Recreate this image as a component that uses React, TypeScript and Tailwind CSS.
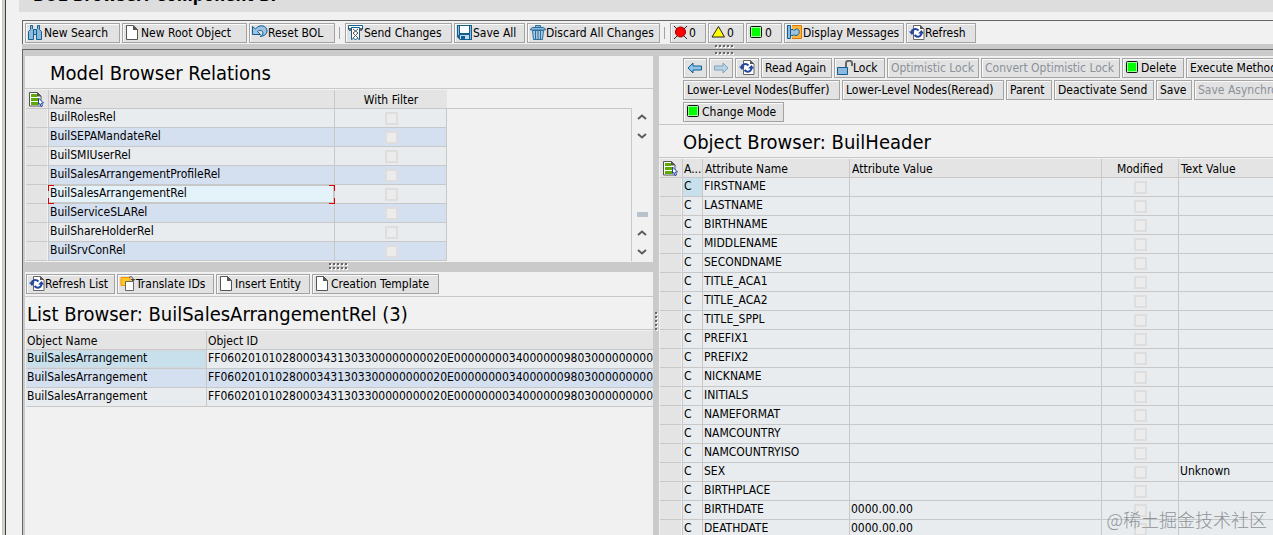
import React from 'react'
import clsx from 'clsx'

type IconName =
  | 'binoculars'
  | 'page'
  | 'undo'
  | 'send'
  | 'save'
  | 'trash'
  | 'red'
  | 'yellow'
  | 'green'
  | 'messages'
  | 'refresh'
  | 'back'
  | 'forward'
  | 'lock'
  | 'translate'
  | 'rows'

const ICONS: Record<IconName, React.ReactNode> = {
  binoculars: (
    <g fill="#8fb9dc" stroke="#0f5f93">
      <path d="M2.5 0.5h2v3l1 1v10h-5v-8l2-2z" />
      <path d="M9.5 0.5h2v4l2 2v8h-5v-10l1-1z" />
      <path d="M5.5 4.5h3v5h-3z" />
    </g>
  ),
  page: (
    <g>
      <path d="M1.5 0.5h7l4 4v10h-11z" fill="#fff" stroke="#555" />
      <path d="M8 0l5 5h-5z" fill="#555" />
    </g>
  ),
  undo: (
    <path
      d="M0.5 1.5v8h8l-3-3c2-2 5.5-1 5.5 1.5 0 1.5-1 2.5-3 3.5 4.5-.5 7-2.5 7-5.5 0-5.5-7.5-7.5-11.5-2z"
      fill="#9cc3e2"
      stroke="#0f5f93"
    />
  ),
  send: (
    <g>
      <path d="M0.5 0.5h14v4h-14z" fill="#fff" stroke="#0f5f93" />
      <path d="M1 3h13v3h-13z" fill="#666" />
      <path d="M3.5 2.5h8v12l-2-1-2 1-2-1-2 1z" fill="#fff" stroke="#0f5f93" />
      <path d="M5 4l5 4-5 5M10 4l-5 4 5 5" stroke="#555" fill="none" />
    </g>
  ),
  save: (
    <g>
      <path d="M0 0h15v15h-12l-3-3z" fill="#0f5f93" />
      <path d="M3 1h9v7h-9z" fill="#fff" />
      <path d="M1 1h1v9h-1zM13 1h1v13h-1z" fill="#8fb9dc" />
      <path d="M3 10h9v4h-9z" fill="#c4d9ea" />
      <path d="M4 11h4v3h-4z" fill="#0f5f93" />
    </g>
  ),
  trash: (
    <g>
      <path d="M5.5 2.5v-2h5v2M0.5 5v-1l2-1.5h11l2 1.5v1z" fill="#8fb9dc" stroke="#2b6f9d" />
      <path d="M2.5 5.5h11l-1 9h-9z" fill="#a9c9e3" stroke="#2b6f9d" />
      <path d="M5.5 6v8M8 6v8M10.5 6v8" stroke="#2b6f9d" />
    </g>
  ),
  red: (
    <g>
      <path d="M1 1l13 13M14 1l-13 13" stroke="#222" />
      <circle cx="7.5" cy="7" r="5" fill="#f00" stroke="#900" />
    </g>
  ),
  yellow: <path d="M7.5 1.5l6 10.5h-12.5z" fill="#ff0" stroke="#222" />,
  green: (
    <g>
      <rect x="1.5" y="1.5" width="11" height="11" rx="1" fill="#9f9" stroke="#111" />
      <rect x="3" y="3" width="8" height="8" fill="#0f0" />
    </g>
  ),
  messages: (
    <g>
      <path d="M5 0.5h9.5v13h-9.5" fill="#ffb43c" stroke="#e07800" />
      <path d="M0.5 0.5h3v13h-3z" fill="#8fb9dc" stroke="#0f5f93" />
      <path d="M3.5 4.5h2.5c1 1.5 1.5 1 3-.5 4-1.5 4.5 6.5 0 6.5-1.5 0-2-1.5-3 0h-2.5z" fill="#9cc3e2" stroke="#0f5f93" />
    </g>
  ),
  refresh: (
    <g>
      <path d="M4.5 0.5h7l3.5 3.5v10.5h-10.5z" fill="#fff" stroke="#666" />
      <path d="M11 0l4 4h-4z" fill="#555" />
      <path d="M2.5 7c.5-3 4.5-4 7-1.5M12.5 8c-.5 4-4.5 5-7 2" stroke="#2345a0" strokeWidth="2" fill="none" />
      <path d="M0 6.5h5.5l-2.5 3.5zM9 8.5l3.5-3.5 2.5 3.5z" fill="#2345a0" />
    </g>
  ),
  back: <path d="M1 8l5-5v3h8.5v4h-8.5v3z" fill="#8fc4ea" stroke="#0f5f93" />,
  forward: <path d="M15 8l-5-5v3h-8.5v4h8.5v3z" fill="#bcd3e4" stroke="#7ea3be" />,
  lock: (
    <g>
      <path d="M9 7v-4c0-3 6-3 6 0v3" fill="none" stroke="#666" strokeWidth="2" />
      <path d="M0.5 7.5h10v7h-10z" fill="#8fb9dc" stroke="#0f5f93" />
    </g>
  ),
  translate: (
    <g>
      <path d="M1 1.5h9v8h-9z" fill="#ffc81e" stroke="#ff9000" />
      <path d="M5.5 5.5h8v9h-8z" fill="#fff" stroke="#666" />
      <path d="M9 1.5c2-1.5 4-.5 4 2" fill="none" stroke="#444" />
      <path d="M10.5 3h5l-2.5 2.5z" fill="#444" />
    </g>
  ),
  rows: (
    <g>
      <path d="M0.5 0.5h8l3.5 3.5v10h-11.5z" fill="#fff" stroke="#555" />
      <path d="M8 0l4.5 4.5h-4.5z" fill="#555" />
      <path d="M2 2h6v3h-6zM2 6h8v3h-8zM2 10h7v3h-7z" fill="#5cab00" />
      <path d="M9.5 6l5 5h-2l1 3-1.5.5-1-3-1.5 1z" fill="#fff" stroke="#2345a0" />
    </g>
  ),
}

function Icon({ name }: { name: IconName }) {
  return (
    <svg viewBox="0 0 16 16" className="size-4 shrink-0" fill="none" aria-hidden="true">
      {ICONS[name]}
    </svg>
  )
}

interface ToolButtonProps {
  icon?: IconName
  label?: string
  title?: string
  disabled?: boolean
  className?: string
}

function ToolButton({ icon, label, title, disabled, className }: ToolButtonProps) {
  return (
    <button
      type="button"
      disabled={disabled}
      aria-label={label ? undefined : title}
      className={clsx(
        'flex h-5 shrink-0 items-center whitespace-nowrap border border-[#a3a3a3] bg-[#e2e2e2] text-black shadow-[inset_1px_1px_0_#fafafa] disabled:text-[#8b9199]',
        icon && label && 'pl-0.5',
        icon && !label && 'px-[3px]',
        !icon && 'pl-[3px]',
        className,
      )}
    >
      {icon && <Icon name={icon} />}
      {label}
    </button>
  )
}

function Divider() {
  return <span className="ml-0.5 mr-[3px] h-3 w-px bg-[#a3a3a3]" />
}

function Grip({ cols, rows }: { cols: number; rows: number }) {
  const dots = []
  for (let y = 0; y < rows; y++) {
    for (let x = 0; x < cols; x++) dots.push([x * 4, y * 4])
  }
  return (
    <svg width={cols * 4} height={rows * 4} aria-hidden="true" className="shrink-0">
      {dots.map(([x, y]) => (
        <g key={`${x}-${y}`}>
          <rect x={x + 1} y={y + 1} width="2" height="2" fill="#fff" />
          <rect x={x} y={y} width="2" height="2" fill="#666" />
        </g>
      ))}
    </svg>
  )
}

function PaneTitle({ children, className }: { children: React.ReactNode; className: string }) {
  return (
    <h2 className={clsx('mb-px h-[33px] truncate border-b border-[#c8c8c8] pt-px text-xl leading-8', className)}>
      {children}
    </h2>
  )
}

function Flag({ label }: { label: string }) {
  return (
    <input
      type="checkbox"
      disabled
      aria-label={label}
      className="mx-auto mt-[3px] block size-[13px] appearance-none border-2 border-[#dedede] bg-[#ececec]"
    />
  )
}

const headCell = 'h-[19px] border-b border-[#c8c8c8] bg-[#e4e4e4] p-0 pt-0.5 text-left font-normal leading-4'
const bodyCell = 'h-[19px] border-b border-r border-[#c8c8c8] p-0 pl-px align-top leading-4 whitespace-nowrap overflow-hidden'
const rowHandle = 'h-[19px] border-b border-r border-b-[#c8c8c8] border-r-[#f1f1f1] bg-[#e4e4e4] p-0'

const RELATIONS = [
  'BuilRolesRel',
  'BuilSEPAMandateRel',
  'BuilSMIUserRel',
  'BuilSalesArrangementProfileRel',
  'BuilSalesArrangementRel',
  'BuilServiceSLARel',
  'BuilShareHolderRel',
  'BuilSrvConRel',
]
const SELECTED = 'BuilSalesArrangementRel'

function FocusCorners() {
  return (
    <>
      <span className="absolute left-0 top-0 size-1.5 border-l border-t border-[#e00000]" />
      <span className="absolute right-0 top-0 size-1.5 border-r border-t border-[#e00000]" />
      <span className="absolute bottom-0 left-0 size-1.5 border-b border-l border-[#e00000]" />
      <span className="absolute bottom-0 right-0 size-1.5 border-b border-r border-[#e00000]" />
    </>
  )
}

function Chevron({ down }: { down?: boolean }) {
  return (
    <button type="button" aria-label={down ? 'Scroll down' : 'Scroll up'} className="flex h-[19px] items-center">
      <svg width="10" height="6" fill="none" stroke="#5c5c5c" strokeWidth="2" aria-hidden="true">
        <path d={down ? 'M1 1l4 3.5 4-3.5' : 'M1 5l4-3.5 4 3.5'} />
      </svg>
    </button>
  )
}

function ModelBrowser() {
  return (
    <section className="pb-px">
      <PaneTitle className="pl-[25px]">Model Browser Relations</PaneTitle>
      <div className="flex pl-px">
        <table className="min-w-0 flex-1 table-fixed border-separate border-spacing-0">
          <colgroup>
            <col className="w-[22px]" />
            <col className="w-[287px]" />
            <col className="w-[112px]" />
            <col />
          </colgroup>
          <thead>
            <tr>
              <th className={headCell} aria-label="Select all">
                <div className="flex justify-center">
                  <Icon name="rows" />
                </div>
              </th>
              <th className={clsx(headCell, 'border-x pl-px')}>Name</th>
              <th className={headCell}>
                <div className="text-center">With Filter</div>
              </th>
              <td className="border-b border-[#c8c8c8]" />
            </tr>
          </thead>
          <tbody>
            {RELATIONS.map((name, i) => (
              <tr key={name} className={i % 2 ? 'bg-[#d4dff0]' : 'bg-[#e8ecef]'}>
                <td className={rowHandle} />
                {name === SELECTED ? (
                  <td className="relative h-[19px] border-x border-b border-[#c8c8c8] bg-[#e4f2fa] p-0 pl-px align-top leading-4 shadow-[inset_-1px_-1px_0_#c8c8c8,inset_0_1px_0_#c8c8c8]">
                    {name}
                    <div className="absolute -bottom-px -left-px -right-px top-0">
                      <FocusCorners />
                    </div>
                  </td>
                ) : (
                  <td className={clsx(bodyCell, 'border-l')}>{name}</td>
                )}
                <td className={bodyCell}>
                  <Flag label={`${name} with filter`} />
                </td>
                {i === 0 && <td rowSpan={RELATIONS.length} className="border-r border-[#c8c8c8] bg-[#f1f1f1]" />}
              </tr>
            ))}
          </tbody>
        </table>
        <div className="mr-px flex w-5 flex-col items-center pt-[17px]">
          <Chevron />
          <Chevron down />
          <div className="flex flex-1 items-end pb-1.5">
            <div className="h-[5px] w-[11px] bg-[#b8c2cd]" />
          </div>
          <Chevron />
          <Chevron down />
        </div>
      </div>
    </section>
  )
}

const OBJECT_ID = 'FF0602010102800034313033' + '000000000' + '20E' + '00000000' + '34' + '000000' + '98030' + '00000000'

function ListBrowser() {
  return (
    <section className="min-w-0 overflow-hidden">
      <div className="flex gap-0.5 border-b border-[#c8c8c8] py-0.5 pl-px">
        <ToolButton icon="refresh" label="Refresh List" className="w-[89px]" />
        <ToolButton icon="translate" label="Translate IDs" className="w-[97px]" />
        <ToolButton icon="page" label="Insert Entity" className="w-[94px]" />
        <ToolButton icon="page" label="Creation Template" className="w-[127px]" />
      </div>
      <PaneTitle className="pl-0.5">List Browser: BuilSalesArrangementRel (3)</PaneTitle>
      <div className="pl-px">
        <table className="w-full table-fixed border-separate border-spacing-0">
          <colgroup>
            <col className="w-[181px]" />
            <col />
          </colgroup>
          <thead>
            <tr>
              <th className={clsx(headCell, 'border-r pl-px')}>Object Name</th>
              <th className={clsx(headCell, 'pl-px')}>Object ID</th>
            </tr>
          </thead>
          <tbody>
            {[0, 1, 2].map((i) => (
              <tr key={i} className={i % 2 ? 'bg-[#d4dff0]' : 'bg-[#e8ecef]'}>
                <td className={clsx(bodyCell, i === 0 && 'bg-[#c8e0ec] shadow-[inset_0_0_0_1px_#d4d8da]')}>
                  BuilSalesArrangement
                </td>
                <td className={clsx(bodyCell, 'border-r-0')}>{OBJECT_ID}</td>
              </tr>
            ))}
          </tbody>
        </table>
      </div>
    </section>
  )
}

interface Attribute {
  name: string
  value?: string
  text?: string
}

const ATTRIBUTES: Attribute[] = [
  { name: 'FIRSTNAME' },
  { name: 'LASTNAME' },
  { name: 'BIRTHNAME' },
  { name: 'MIDDLENAME' },
  { name: 'SECONDNAME' },
  { name: 'TITLE_ACA1' },
  { name: 'TITLE_ACA2' },
  { name: 'TITLE_SPPL' },
  { name: 'PREFIX1' },
  { name: 'PREFIX2' },
  { name: 'NICKNAME' },
  { name: 'INITIALS' },
  { name: 'NAMEFORMAT' },
  { name: 'NAMCOUNTRY' },
  { name: 'NAMCOUNTRYISO' },
  { name: 'SEX', text: 'Unknown' },
  { name: 'BIRTHPLACE' },
  { name: 'BIRTHDATE', value: '0000.00.00' },
  { name: 'DEATHDATE', value: '0000.00.00' },
]

function ObjectBrowser() {
  return (
    <section className="min-w-0 overflow-hidden">
      <div className="flex flex-col gap-0.5 border-b border-[#c8c8c8] py-0.5 pl-6">
        <div className="flex gap-0.5">
          <ToolButton icon="back" title="Back" />
          <ToolButton icon="forward" title="Forward" disabled />
          <ToolButton icon="refresh" title="Refresh" />
          <ToolButton label="Read Again" className="w-[71px]" />
          <ToolButton icon="lock" label="Lock" className="w-[51px]" />
          <ToolButton label="Optimistic Lock" disabled className="w-[92px]" />
          <ToolButton label="Convert Optimistic Lock" disabled className="w-[139px]" />
          <ToolButton icon="green" label="Delete" className="w-[62px]" />
          <ToolButton label="Execute Method" className="w-[96px]" />
        </div>
        <div className="flex gap-0.5">
          <ToolButton label="Lower-Level Nodes(Buffer)" className="w-[157px]" />
          <ToolButton label="Lower-Level Nodes(Reread)" className="w-[162px]" />
          <ToolButton label="Parent" className="w-[46px]" />
          <ToolButton label="Deactivate Send" className="w-[100px]" />
          <ToolButton label="Save" className="w-9" />
          <ToolButton label="Save Asynchronously" disabled className="w-[127px]" />
        </div>
        <div className="flex gap-0.5">
          <ToolButton icon="green" label="Change Mode" className="w-[101px]" />
        </div>
      </div>
      <PaneTitle className="pl-6">Object Browser: BuilHeader</PaneTitle>
      <div className="pl-px">
        <table className="w-full table-fixed border-separate border-spacing-0">
          <colgroup>
            <col className="w-[22px]" />
            <col className="w-[21px]" />
            <col className="w-[147px]" />
            <col className="w-[252px]" />
            <col className="w-[77px]" />
            <col />
          </colgroup>
          <thead>
            <tr>
              <th className={headCell} aria-label="Select all">
                <div className="flex justify-center">
                  <Icon name="rows" />
                </div>
              </th>
              <th className={clsx(headCell, 'border-x pl-px')}>A...</th>
              <th className={clsx(headCell, 'border-r pl-0.5')}>Attribute Name</th>
              <th className={clsx(headCell, 'border-r pl-0.5')}>Attribute Value</th>
              <th className={clsx(headCell, 'border-r')}>
                <div className="text-center">Modified</div>
              </th>
              <th className={clsx(headCell, 'pl-0.5')}>Text Value</th>
            </tr>
          </thead>
          <tbody>
            {ATTRIBUTES.map((a, i) => (
              <tr key={a.name} className="bg-[#e8ecef]">
                <td className={rowHandle} />
                <td className={clsx(bodyCell, 'border-l', i === 0 && 'bg-[#c8e0ec]')}>C</td>
                <td className={bodyCell}>{a.name}</td>
                <td className={bodyCell}>{a.value}</td>
                <td className={bodyCell}>
                  <Flag label={`${a.name} modified`} />
                </td>
                <td className={clsx(bodyCell, 'border-r-0')}>{a.text}</td>
              </tr>
            ))}
          </tbody>
        </table>
      </div>
    </section>
  )
}

export default function App() {
  return (
    <div className="relative flex h-screen overflow-hidden bg-[#f1f1f1] font-['DejaVu_Sans_Condensed','DejaVu_Sans',sans-serif] text-xs text-black">
      <div className="flex w-1.5 shrink-0 border-r border-[#404040] bg-[#d4d0c8]">
        <div className="w-[3px] border-r border-[#c8c8c8] bg-white" />
      </div>
      <div className="flex min-w-0 flex-1 flex-col pl-[13px]">
        <header className="flex h-3 items-end overflow-hidden bg-[#dddddd] pb-[7px] pl-3.5">
          <h1 className="whitespace-nowrap text-[17px] font-bold leading-5">BOL Browser: Component BP</h1>
        </header>
        <div className="ml-[3px] mt-2 flex h-6 shrink-0 items-center gap-0.5 border-l border-t border-[#666666] pl-0.5 pt-px">
          <ToolButton icon="binoculars" label="New Search" className="w-[95px]" />
          <ToolButton icon="page" label="New Root Object" className="w-[125px]" />
          <ToolButton icon="undo" label="Reset BOL" className="w-[86px]" />
          <Divider />
          <ToolButton icon="send" label="Send Changes" className="w-[107px]" />
          <ToolButton icon="save" label="Save All" className="w-[71px]" />
          <ToolButton icon="trash" label="Discard All Changes" className="w-[133px]" />
          <Divider />
          <ToolButton icon="red" label="0" className="w-9" />
          <ToolButton icon="yellow" label="0" className="w-9" />
          <ToolButton icon="green" label="0" className="w-9" />
          <ToolButton icon="messages" label="Display Messages" className="w-[120px]" />
          <ToolButton icon="refresh" label="Refresh" className="w-[70px]" />
        </div>
        <div className="ml-[3px] flex h-[5px] shrink-0 items-end bg-[#cacaca] pl-[693px]">
          <Grip cols={5} rows={1} />
        </div>
        <div className="ml-[3px] flex min-h-0 flex-1 flex-col border-l border-t border-[#666666]">
          <div className="flex h-1.5 shrink-0 items-end bg-[#cacaca] pl-[692px]">
            <Grip cols={5} rows={1} />
          </div>
          <div className="grid min-h-0 flex-1 grid-cols-[minmax(0,628fr)_6px_minmax(0,614fr)] border-l-2 border-[#cacaca]">
            <div className="min-w-0">
              <ModelBrowser />
              <div className="flex h-2.5 items-center justify-center bg-[#cacaca]">
                <Grip cols={5} rows={2} />
              </div>
              <ListBrowser />
            </div>
            <div className="flex justify-end bg-[#cacaca] pt-64">
              <Grip cols={1} rows={5} />
            </div>
            <ObjectBrowser />
          </div>
        </div>
      </div>
      <div className="absolute bottom-1 right-1.5 font-['Noto_Sans_CJK_SC',sans-serif] text-lg font-light leading-6 text-[#8f9397]">
        @稀土掘金技术社区
      </div>
    </div>
  )
}
